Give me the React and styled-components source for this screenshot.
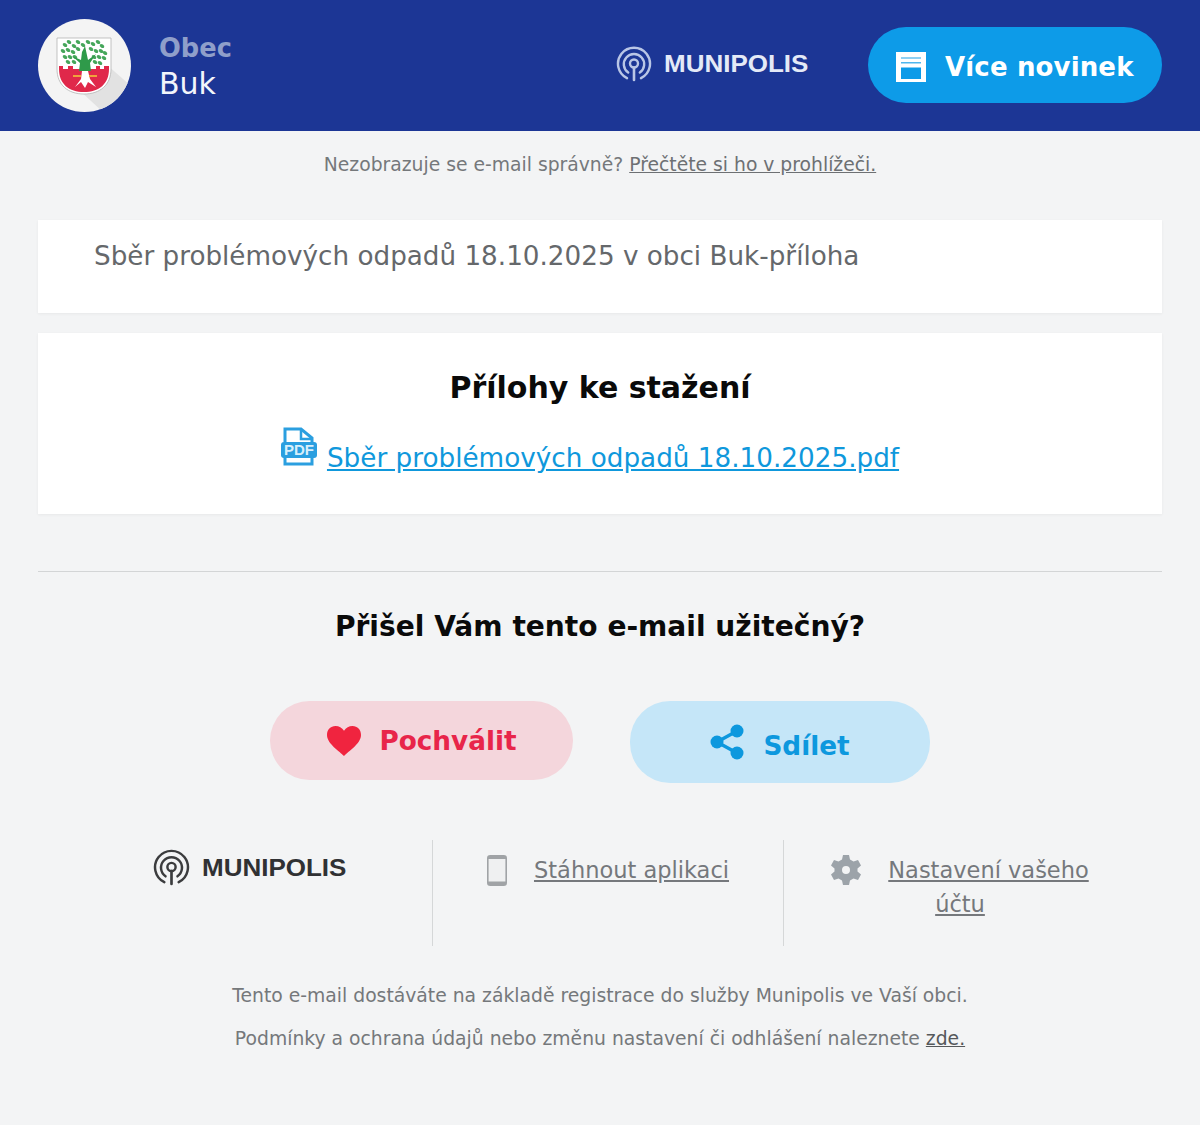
import React from 'react';
import styled, { createGlobalStyle } from 'styled-components';

const Global = createGlobalStyle`
  html, body { margin: 0; padding: 0; background: #f3f4f5; }
  body { font-family: "DejaVu Sans", sans-serif; }
`;
const Page = styled.div`
  width: 1200px; height: 1125px; background: #f3f4f5; overflow: hidden;
  display: flex; flex-direction: column;
`;
const Header = styled.header`
  height: 131px; background: #1c3695; display: flex; align-items: center;
  padding: 0 38px; box-sizing: border-box;
`;
const LogoCircle = styled.div`
  width: 93px; height: 93px; border-radius: 50%; background: #f4f4f4; flex: none;
  overflow: hidden;
`;
const Town = styled.div`
  margin-left: 28px; display: flex; flex-direction: column; margin-top: 3px;
`;
const TownLabel = styled.div`
  font-size: 25.7px; font-weight: 700; line-height: 34px; color: #8f9fca;
`;
const TownName = styled.div`
  font-size: 30px; line-height: 38px; color: #f2f5fb;
`;
const HeaderBrand = styled.div`
  margin-left: auto; display: flex; align-items: center; gap: 12px; margin-top: -3px;
`;
const Wordmark = styled.span`
  font-family: "Liberation Sans", Arial, sans-serif; font-weight: 700;
  font-size: ${p => p.$size}px; color: ${p => p.$color};
  transform: scaleX(${p => p.$stretch}); transform-origin: left center; display: inline-block;
  width: ${p => p.$width}px; white-space: nowrap; margin-top: ${p => p.$drop || 0}px;
`;
const MoreButton = styled.a`
  margin-left: 60px; width: 294px; height: 76px; border-radius: 38px; background: #0d9be8; flex: none;
  display: flex; align-items: center; padding: 4px 0 0 28px; box-sizing: border-box; gap: 19px;
  color: #fff; font-size: 26px; font-weight: 700; margin-top: -2px; letter-spacing: 0.15px;
`;
const Notice = styled.p`
  margin: 21px 0 0; text-align: center; font-size: 18.75px; line-height: 26px; color: #75787b;
`;
const NoticeLink = styled.a`
  color: #6d7073; text-decoration: underline;
`;
const Card = styled.section`
  margin: ${p => p.$top}px 38px 0; background: #fff; box-shadow: 0 1px 3px rgba(0,0,0,.05);
  box-sizing: border-box; height: ${p => p.$h}px;
`;
const Lead = styled.div`
  padding: 17px 0 0 56px; font-size: 26.23px; line-height: 38px; color: #65686b;
`;
const CardTitle = styled.h2`
  margin: 0; padding-top: 34px; text-align: center; font-size: 30px; line-height: 42px; font-weight: 700; color: #0a0a0a;
`;
const Attachment = styled.div`
  display: flex; justify-content: center; align-items: flex-start; margin: 18px 20px 0 0; gap: 10px;
`;
const AttachmentLink = styled.a`
  font-size: 26.25px; line-height: 38px; color: #0f98dc; text-decoration: underline; margin-top: 12px;
`;
const Rule = styled.hr`
  margin: 57px 38px 0; border: 0; height: 1px; background: #d3d5d6;
`;
const Question = styled.h2`
  margin: 33px 0 0; text-align: center; font-size: 28.1px; line-height: 44px; font-weight: 700; color: #0a0a0a;
`;
const Actions = styled.div`
  margin: 52px 0 0 270px; display: flex; align-items: flex-start; gap: 57px;
`;
const Pill = styled.a`
  box-sizing: border-box; width: ${p => p.$w}px; height: ${p => p.$h}px; border-radius: 40px; background: ${p => p.$bg};
  color: ${p => p.$fg}; font-size: 26.3px; font-weight: 700; display: flex; align-items: center; justify-content: center;
  gap: ${p => p.$gap}px;
`;
const PillLabel = styled.span`
  margin-top: ${p => p.$drop}px;
`;
const FootLinks = styled.div`
  margin: 57px 38px 0; display: grid; grid-template-columns: 394px 351px 379px; height: 106px;
`;
const FootCell = styled.div`
  box-sizing: border-box; border-left: ${p => p.$line ? '1px solid #d5d7d8' : '0'};
  display: flex; align-items: flex-start; justify-content: center;
`;
const BrandDark = styled.div`
  display: flex; align-items: center; gap: 12px; margin: 9px 0 0 29px;
`;
const FootApp = styled.div`
  display: flex; align-items: flex-start; gap: 27px; margin: 15px 0 0 0;
`;
const FootSettings = styled.div`
  margin: 13px 0 0 -26px; text-align: center; font-size: 22.5px; line-height: 34px;
`;
const PhoneSlot = styled.span`
  display: block;
  svg { display: block; }
`;
const GearSlot = styled.span`
  display: inline-block; vertical-align: top; margin: 2px 27px 0 0; height: 30px;
  svg { display: block; }
`;
const FootLink = styled.a`
  font-size: 22.5px; line-height: 34px; color: #75787c; text-decoration: underline; text-align: center;
  margin-top: ${p => p.$lift || 0}px;
`;
const Legal = styled.p`
  margin: ${p => p.$top}px 0 0; text-align: center; font-size: 18.77px; line-height: 26px; color: #75787b;
`;
const LegalLink = styled.a`
  color: #55585b; text-decoration: underline;
`;

const RadioMark = ({ color, size }) => (
  <svg width={size} height={size} viewBox="0 0 36 36" fill="none" stroke={color} strokeLinecap="round">
    <path d="M11 32.2A16 16 0 1 1 25 32.2" strokeWidth="2.4" />
    <path d="M12.2 26.6A10.2 10.2 0 1 1 23.8 26.6" strokeWidth="2.4" />
    <circle cx="18" cy="17.5" r="4" strokeWidth="2.4" />
    <path d="M18 21.5V34" strokeWidth="2.6" />
  </svg>
);

const leaves = [
  [27, 26], [31, 23], [36, 27], [40, 23], [45, 26], [50, 23], [55, 25], [60, 23], [64, 27],
  [25, 32], [30, 31], [35, 33], [40, 30], [53, 30], [58, 32], [63, 32], [67, 34],
  [27, 38], [32, 38], [37, 38], [56, 38], [61, 38], [66, 39], [30, 43], [62, 44], [36, 43], [57, 43],
];

const Crest = () => (
  <svg width="93" height="93" viewBox="0 0 93 93">
    <path d="M60 38L94 68V94H66L40 70Z" fill="#e2e2e2" />
    <path d="M19 19H73V50C73 66 62 75 46 75C30 75 19 66 19 50Z" fill="#fff" stroke="#b4b4b4" strokeWidth="0.8" />
    <path d="M21 50V47H25V50H30V47H35V50H58V47H62V50H66V47H71V50C71 65 61 73 46 73C31 73 21 65 21 50Z" fill="#e0284a" />
    <g fill="#45a65a">
      {leaves.map(([x, y]) => <ellipse key={`${x}-${y}`} cx={x} cy={y} rx="2.5" ry="1.7" transform={`rotate(35 ${x} ${y})`} />)}
    </g>
    <path d="M41 52L42 44L34 37L43 41L44 33L47 27L50 41L58 35L52 44L53 52Z" fill="#2f9a4a" />
    <path d="M37 68L43 60L44 52H50L52 60L58 68L50 63L47 69L43 63Z" fill="#fff" />
    <path d="M35 56H43V58H35ZM51 56H59V58H51Z" fill="#efa23c" />
  </svg>
);

const CalendarIcon = () => (
  <svg width="30" height="30" viewBox="0 0 30 30">
    <rect width="30" height="30" fill="#fff" />
    <rect x="5" y="5" width="20" height="2" fill="#8fd0f3" />
    <rect x="5" y="10" width="20" height="1.500" fill="#4fb6ee" />
    <rect x="5" y="15.500" width="20" height="11.500" fill="#0d9be8" />
  </svg>
);

const PdfIcon = () => (
  <svg width="36" height="40" viewBox="0 0 36 40">
    <path d="M4 15V2H20L31 11V15M4 30V37H31V30" fill="none" stroke="#2b9fe0" strokeWidth="3" />
    <path d="M20 2V12H31" fill="none" stroke="#2b9fe0" strokeWidth="2.500" />
    <rect x="0" y="15" width="36" height="16" rx="3" fill="#2b9fe0" />
    <text x="18" y="28" textAnchor="middle" fontFamily="Liberation Sans, sans-serif" fontWeight="700" fontSize="15" fill="#d8effb">PDF</text>
  </svg>
);

const HeartIcon = () => (
  <svg width="36" height="30" viewBox="0 0 36 32" preserveAspectRatio="none">
    <path fill="#f0243f" d="M18 32C14 27 1 19 1 9.500C1 4 4.500 0 9.500 0C13 0 16 2 18 5C20 2 23 0 26.500 0C31.500 0 35 4 35 9.500C35 19 22 27 18 32Z" />
  </svg>
);

const ShareIcon = () => (
  <svg width="36" height="36" viewBox="0 0 36 36">
    <path d="M7 18L27 7M7 18L27 29" stroke="#0d98de" strokeWidth="3.500" />
    <circle cx="7" cy="18" r="6.500" fill="#0d98de" /><circle cx="27" cy="7" r="6.500" fill="#0d98de" /><circle cx="27" cy="29" r="6.500" fill="#0d98de" />
  </svg>
);

const PhoneIcon = () => (
  <svg width="20" height="31" viewBox="0 0 20 31">
    <rect x="0.800" y="0.800" width="18.400" height="29.400" rx="2.500" fill="#eff0f1" stroke="#a0a3a6" strokeWidth="1.600" />
    <rect x="1" y="1" width="18" height="3" fill="#a0a3a6" /><rect x="1" y="26.500" width="18" height="3.500" fill="#a0a3a6" />
  </svg>
);

const GearIcon = () => (
  <svg width="30" height="30" viewBox="0 0 30 30">
    <path fillRule="evenodd" fill="#9ca3a9" d="M12 0H18L19 4.500L22.500 6.500L27 5L30 10.500L26.500 13.500V16.500L30 19.500L27 25L22.500 23.500L19 25.500L18 30H12L11 25.500L7.500 23.500L3 25L0 19.500L3.500 16.500V13.500L0 10.500L3 5L7.500 6.500L11 4.500ZM15 11A4 4 0 1 0 15 19A4 4 0 1 0 15 11Z" />
  </svg>
);

export default function App() {
  return (
    <Page>
      <Global />
      <Header>
        <LogoCircle><Crest /></LogoCircle>
        <Town>
          <TownLabel>Obec</TownLabel>
          <TownName>Buk</TownName>
        </Town>
        <HeaderBrand>
          <RadioMark color="#b9c6e6" size={36} />
          <Wordmark $size={23} $color="#e4eaf7" $stretch={1.13} $width={144}>MUNIPOLIS</Wordmark>
        </HeaderBrand>
        <MoreButton><CalendarIcon />Více novinek</MoreButton>
      </Header>
      <Notice>Nezobrazuje se e-mail správně? <NoticeLink>Přečtěte si ho v prohlížeči.</NoticeLink></Notice>
      <Card $top={42} $h={93}>
        <Lead>Sběr problémových odpadů 18.10.2025 v obci Buk-příloha</Lead>
      </Card>
      <Card $top={20} $h={181}>
        <CardTitle>Přílohy ke stažení</CardTitle>
        <Attachment>
          <PdfIcon />
          <AttachmentLink>Sběr problémových odpadů 18.10.2025.pdf</AttachmentLink>
        </Attachment>
      </Card>
      <Rule />
      <Question>Přišel Vám tento e-mail užitečný?</Question>
      <Actions>
        <Pill $w={303} $h={79} $bg="#f4d6dc" $fg="#e8254a" $gap={17}><HeartIcon /><PillLabel $drop={1}>Pochválit</PillLabel></Pill>
        <Pill $w={300} $h={82} $bg="#c5e6f8" $fg="#0d98de" $gap={17}><ShareIcon /><PillLabel $drop={7}>Sdílet</PillLabel></Pill>
      </Actions>
      <FootLinks>
        <FootCell>
          <BrandDark>
            <RadioMark color="#3b3c3e" size={37} />
            <Wordmark $size={23} $color="#303133" $stretch={1.13} $width={144} $drop={2}>MUNIPOLIS</Wordmark>
          </BrandDark>
        </FootCell>
        <FootCell $line>
          <FootApp>
            <PhoneSlot><PhoneIcon /></PhoneSlot>
            <FootLink $lift={-2}>Stáhnout aplikaci</FootLink>
          </FootApp>
        </FootCell>
        <FootCell $line>
          <FootSettings>
            <GearSlot><GearIcon /></GearSlot>
            <FootLink>Nastavení vašeho<br />účtu</FootLink>
          </FootSettings>
        </FootCell>
      </FootLinks>
      <Legal $top={37}>Tento e-mail dostáváte na základě registrace do služby Munipolis ve Vaší obci.</Legal>
      <Legal $top={17}>Podmínky a ochrana údajů nebo změnu nastavení či odhlášení naleznete <LegalLink>zde.</LegalLink></Legal>
    </Page>
  );
}
